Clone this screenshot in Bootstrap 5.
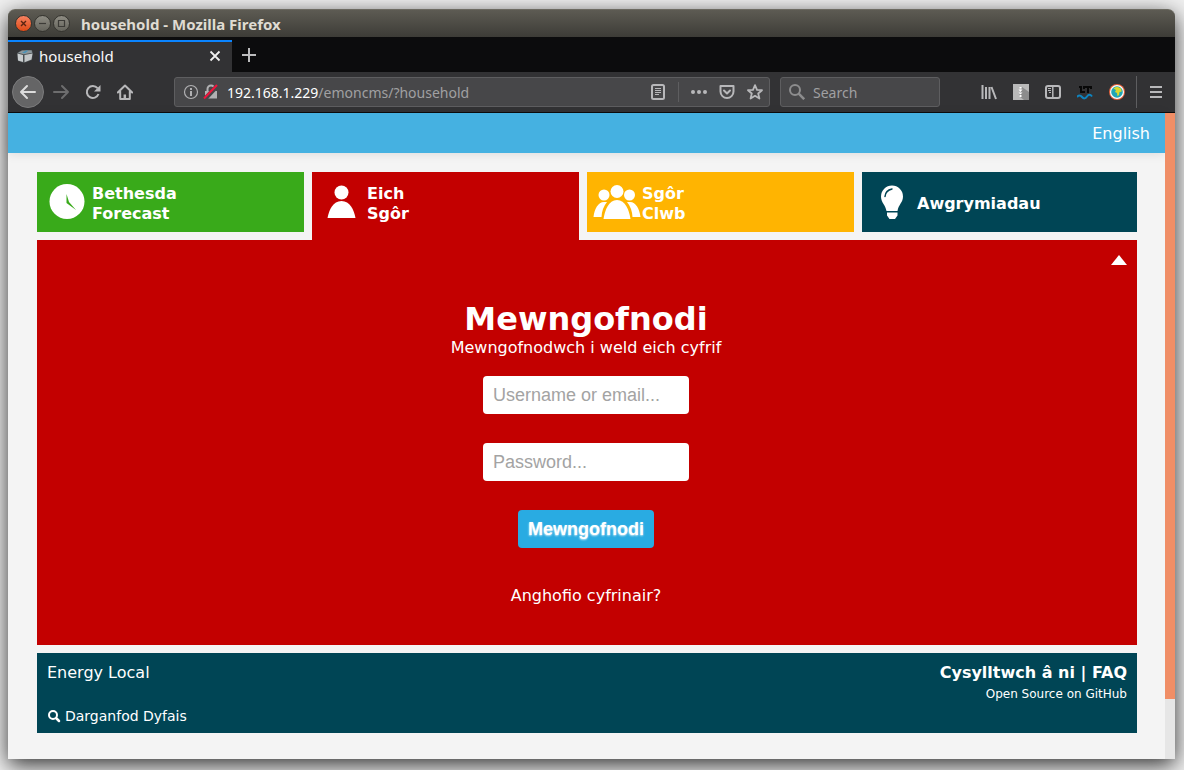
<!DOCTYPE html>
<html lang="cy">
<head>
<meta charset="utf-8">
<meta name="viewport" content="width=device-width, initial-scale=1">
<title>household - Mozilla Firefox</title>
<link href="https://cdn.jsdelivr.net/npm/bootstrap@5.3.0/dist/css/bootstrap.min.css" rel="stylesheet">
<style>
  :root { --red: #c30000; --green: #39aa1a; --amber: #ffb401; --teal: #004555; --sky: #45b1e1; --page: #f4f4f4; }
  body { font: 16px/20px "DejaVu Sans", sans-serif; background: #f0f0f0; color: #fff; }
  a { color: #fff; text-decoration: none; }
  a:hover { color: #fff; text-decoration: underline; }
  svg { display: block; flex: none; }
  .desktop { min-height: 100vh; padding: 9px 9px 11px 8px; overflow: hidden; }
  .app-window { border-radius: 7px 7px 0 0; box-shadow: 0 6px 22px rgba(0, 0, 0, .8); }

  /* browser chrome */
  .chrome-text { font-family: "Noto Sans", sans-serif; font-size: 14px; }
  .title-bar { height: 28px; padding-left: 7px; border-radius: 7px 7px 0 0; color: #dfdbd2; background: linear-gradient(#5d5b53, #3d3c37); border-top: 1px solid #6c6a61; }
  .title-bar strong { font-size: 15px; }
  .win-buttons { gap: 2px; margin-right: 11px; }
  .win-btn { width: 17px; height: 17px; padding: 0; border: 1px solid #35342f; border-radius: 50%; background: linear-gradient(#8e8c83, #65645c); display: grid; place-items: center; }
  .win-close { background: linear-gradient(#f58261, #df4a16); }
  .tab-strip { height: 35px; background: #0c0c0d; padding-top: 3px; }
  .browser-tab { width: 224px; background: #323234; border-top: 2px solid #0a84ff; padding: 0 9px 2px; color: #f9f9fa; font-size: 15px; gap: 6px; }
  .bare { background: none; border: 0; padding: 0; color: #b8b8ba; display: grid; place-items: center; }
  .new-tab { width: 34px; padding-bottom: 2px; }
  .tool-bar { height: 41px; background: #323234; border-bottom: 1px solid #0c0c0d; padding: 0 3px 0 4px; }
  .tool-bar .bare { width: 32px; height: 32px; flex: none; }
  .tool-bar .back { border: 1px solid #7c7c7d; border-radius: 50%; background: #656566; color: #dcdcdc; margin-right: 1px; }
  .field { height: 30px; background: #474749; border: 1px solid #5e5e60; border-radius: 3px; color: #b1b1b3; }
  .field input { background: none; border: 0; padding: 0; outline: 0; color: #a0a0a2; min-width: 0; }
  .field input::placeholder { color: #a0a0a2; opacity: 1; }
  .tool-bar .field .bare { width: 28px; height: 28px; }
  .field label, .field input { padding-top: 2px; }
  .url-field { margin: 0 10px 0 33px; padding-left: 8px; }
  .search-field { width: 160px; margin-right: 33px; }
  .divider { width: 1px; background: #5e5e60; margin: 4px 3px; }
  .field .divider { margin: 4px 6px; }

  /* page */
  .viewport-area { background: var(--page); }
  .site-bar { height: 40px; background: var(--sky); box-shadow: 0 1px 10px rgba(0, 0, 0, .1); padding: 2px 15px 0; }
  .scroll-track { width: 10px; background: #e6e6e6; }
  .scroll-thumb { height: 586px; background: #f08e66; }
  .site-main { padding: 19px 28px 26px 29px; }
  .tile { height: 60px; width: 100%; border: 0; padding: 0 5px; color: #fff; font-weight: bold; text-align: left; display: flex; align-items: center; }
  .tile svg { width: 50px; height: 50px; }
  .tile span { padding-top: 3px; }
  .tile.active { height: 68px; padding-bottom: 8px; }
  .bg-green { background: var(--green); }
  .bg-red { background: var(--red); }
  .bg-amber { background: var(--amber); }
  .bg-teal { background: var(--teal); }
  .login-panel { min-height: 405px; padding: 14px 9px 38px; }
  .login-panel h1 { font-size: 32px; line-height: 38px; font-weight: bold; margin: 34px 0 0; }
  .login-form { padding-right: 2px; }
  .login-form p { margin-bottom: 18px; }
  .login-input { width: 206px; height: 38px; border: 0; border-radius: 4px; padding: 0 10px; margin-bottom: 29px; font: 18px/24px "Liberation Sans", sans-serif; color: #555; }
  .login-input::placeholder { color: #a3a3a3; opacity: 1; }
  .login-btn { height: 38px; border: 0; border-radius: 4px; background: #29abe2; color: #fff; padding: 0 10px; margin-bottom: 38px; font: bold 18px/24px "Liberation Sans", sans-serif; text-shadow: 0 1px 2px rgba(255, 255, 255, .75); }
  .site-footer { min-height: 80px; padding: 10px 10px 7px; }
  .text-sm { font-size: 14px; }
  .text-xs { font-size: 12px; }
</style>
</head>
<body>
<div class="desktop d-flex flex-column">
<div class="app-window d-flex flex-column flex-grow-1">

  <div class="title-bar chrome-text d-flex align-items-center">
    <div class="win-buttons d-flex">
      <button class="win-btn win-close" aria-label="Close"><svg width="7" height="7" stroke="#5a2412" stroke-width="1.4"><path d="M1 1l5 5M6 1l-5 5"/></svg></button>
      <button class="win-btn" aria-label="Minimize"><svg width="9" height="9" stroke="#3c3b37" stroke-width="1.2"><path d="M1 4.500h7"/></svg></button>
      <button class="win-btn" aria-label="Maximize"><svg width="9" height="9" stroke="#3c3b37" stroke-width="1.2" fill="none"><path d="M1.500 1.500h6v6h-6z"/></svg></button>
    </div>
    <strong>household - Mozilla Firefox</strong>
  </div>

  <div class="tab-strip chrome-text d-flex">
    <div class="browser-tab d-flex align-items-center">
      <svg width="16" height="14" viewBox="0 0 16 14"><path fill="#4a4f52" d="M0 4l5-3 10 0 1 3-1 7-8 3-6-2z"/><path fill="#c9cdcf" d="M.5 4.500l5.500 1.500v7l-5-1.500z"/><path fill="#c3c7c9" d="M7.500 6l8-1.500-1 6-7 2.800z"/><path fill="#8d989d" d="M1 3.800l4-2.300 9.500-.3.700 2.500-8.500 1.600z"/><path fill="#4a93b8" d="M5 3.800l4-2.400h2.500L8 4.300z"/></svg>
      <span class="flex-grow-1">household</span>
      <button class="bare" aria-label="Close tab"><svg width="16" height="16" stroke="#f0f0f0" stroke-width="1.800"><path d="M3.500 3.500l9 9M12.500 3.500l-9 9"/></svg></button>
    </div>
    <button class="bare new-tab" aria-label="New tab"><svg width="16" height="16" stroke="#bcbcbd" stroke-width="2"><path d="M8 1v14M1 8h14"/></svg></button>
  </div>

  <div class="tool-bar chrome-text d-flex align-items-center">
    <button class="bare back" aria-label="Back"><svg width="18" height="16" fill="none" stroke="currentColor" stroke-width="2" stroke-linecap="round" stroke-linejoin="round"><path d="M16 8H2M8 2L2 8l6 6"/></svg></button>
    <button class="bare" aria-label="Forward"><svg width="18" height="16" fill="none" stroke="#6d6d6e" stroke-width="2" stroke-linecap="round" stroke-linejoin="round"><path d="M2 8h14M10 2l6 6-6 6"/></svg></button>
    <button class="bare" aria-label="Reload"><svg width="16" height="16" fill="none" stroke="currentColor" stroke-width="2"><path d="M13.500 10A6 6 0 1 1 12.500 4.200"/><path fill="currentColor" stroke="none" d="M15.500 1v6.500H9z"/></svg></button>
    <button class="bare" aria-label="Home"><svg width="16" height="16" fill="none" stroke="currentColor" stroke-width="2" stroke-linejoin="round"><path d="M.8 8.500L8 1.500l7.200 7M3.200 7.500V15h9.600V7.500" stroke-linecap="round"/><path d="M7.800 15v-4.500" stroke-width="2.500"/></svg></button>

    <div class="field url-field flex-grow-1 d-flex align-items-center">
      <svg width="16" height="16" fill="none" stroke="currentColor" stroke-width="1.200"><circle cx="8" cy="8" r="6.500"/><path stroke-width="2" d="M8 7v5M8 4v2"/></svg>
      <svg class="ms-1" width="16" height="16" viewBox="0 0 16 16"><path fill="#b1b1b3" d="M2 7h12v7.500H2z"/><path fill="none" stroke="#b1b1b3" stroke-width="2" d="M4.500 8V5a3.500 3.500 0 0 1 7 0v3"/><path stroke="#474749" stroke-width="4.500" d="M1 16L15 1"/><path stroke="#f0143c" stroke-width="2" d="M1 14.500L14 1"/></svg>
      <label class="ps-2 text-white" for="address">192.168.1.229</label>
      <input id="address" class="flex-grow-1" value="/emoncms/?household">
      <button class="bare" aria-label="Reader view"><svg width="16" height="16" fill="none" stroke="currentColor"><rect x="2" y="1" width="12" height="14" rx="1.500" stroke-width="2"/><path d="M5 4.500h6M5 6.500h6M5 8.500h6M5 10.500h4"/></svg></button>
      <span class="divider align-self-stretch"></span>
      <button class="bare" aria-label="Page actions"><svg width="16" height="16" fill="currentColor"><circle cx="2" cy="8" r="2"/><circle cx="8" cy="8" r="2"/><circle cx="14" cy="8" r="2"/></svg></button>
      <button class="bare" aria-label="Save to Pocket"><svg width="16" height="16" fill="none" stroke="currentColor" stroke-width="2" stroke-linecap="round" stroke-linejoin="round"><path d="M1.500 2h13v5.500a6.500 6.500 0 0 1-13 0zM5 6.500l3 3 3-3"/></svg></button>
      <button class="bare" aria-label="Bookmark"><svg width="16" height="16" fill="none" stroke="currentColor" stroke-width="1.800" stroke-linejoin="round"><path d="M8 1.200l2 4.600 5 .4-3.800 3.300 1.200 5L8 11.800 3.600 14.500l1.200-5L1 6.200l5-.4z"/></svg></button>
    </div>
    <div class="field search-field d-flex align-items-center ps-2 gap-2">
      <svg width="16" height="16" fill="none" stroke="#8d8d8e" stroke-width="2"><circle cx="6" cy="6" r="5"/><path stroke-width="2.500" d="M9.700 9.700l5.500 5.500"/></svg>
      <input class="w-75" type="search" placeholder="Search" aria-label="Search">
    </div>

    <div class="d-flex">
      <button class="bare" aria-label="Library"><svg width="16" height="16" stroke="currentColor" stroke-width="2"><path d="M1.500 1v14M5 3v12M8.500 3v12M10.500 3l4.500 12"/></svg></button>
      <button class="bare" aria-label="Archive extension"><svg width="16" height="16"><path fill="#b9b9b9" d="M0 0h16v16H0z"/><path fill="#8c8c8c" d="M9 3l7 5v8h-5l-5-4z"/><path fill="#fff" d="M6.500 3h2v1.500h-2zM5.500 5.500h4l-2 2.500zM5.500 8.500h4l-2 2zM6.500 11h2v2h-2z"/></svg></button>
      <button class="bare" aria-label="Sidebars"><svg width="16" height="16" fill="none" stroke="currentColor"><rect x="1" y="2" width="14" height="12" rx="2" stroke-width="2"/><path stroke-width="1.500" d="M7.800 2v12"/><path d="M3 4.500h3M3 6.500h3M4 8.500h2"/></svg></button>
      <button class="bare" aria-label="LanguageTool"><svg width="16" height="16" fill="none"><path stroke="#080808" stroke-width="2" d="M2 3h2v5h4M7 5V3h7v2M11 3v6"/><path stroke="#0e84c0" stroke-width="2" d="M0 13q2.500-3 5 0t5-.5 5 0"/></svg></button>
      <button class="bare" aria-label="Globe extension"><svg width="16" height="16"><circle cx="8" cy="8" r="8" fill="#e0603c"/><circle cx="8" cy="8" r="7" fill="#fff"/><circle cx="8" cy="8" r="5.800" fill="#21a5b5"/><path fill="#d9d82c" d="M4.500 4.500q1.500-1.500 4-1.800l3.500 1.800.8 3-2.300.5-.5 3-1.500 1.200-.5-3.200L6 8 7 6z"/></svg></button>
    </div>
    <span class="divider align-self-stretch"></span>
    <button class="bare" aria-label="Menu"><svg width="12" height="12" stroke="currentColor" stroke-width="2"><path d="M0 1h12M0 6h12M0 11h12"/></svg></button>
  </div>

  <div class="viewport-area d-flex flex-grow-1">
    <div class="flex-grow-1 d-flex flex-column">
      <nav class="site-bar d-flex align-items-center justify-content-end"><a href="#">English</a></nav>

      <main class="site-main">
        <div class="row g-0 align-items-start">
          <div class="col-3 pe-2"><button class="tile bg-green">
            <svg viewBox="0 0 50 50"><circle cx="25" cy="24.500" r="17.500" fill="#fff"/><path fill="#39aa1a" d="M24.500 17l2.500 8 7 8-9.500-7z"/></svg>
            <span>Bethesda<br>Forecast</span></button></div>
          <div class="col-3 pe-2"><button class="tile active bg-red">
            <svg viewBox="0 0 50 50" fill="#fff"><circle cx="24.500" cy="15.500" r="7"/><path d="M10.500 41C12 33 16 24 24.500 24S37 33 38.500 41z"/></svg>
            <span>Eich<br>Sgôr</span></button></div>
          <div class="col-3 pe-2"><button class="tile bg-amber">
            <svg viewBox="0 0 50 50" fill="#fff"><circle cx="12" cy="18" r="5.500"/><circle cx="37.500" cy="18" r="5.500"/><path d="M1.500 40C2.500 32 6 25 12 25h3Q10 31 9.500 40zM48.500 40C47.500 32 44 25 38 25h-3Q40 31 40.500 40z"/><circle cx="25" cy="14.500" r="6.500"/><path d="M11.500 42C13 33 16.500 23 25 23S37 33 38.500 42z"/></svg>
            <span>Sgôr<br>Clwb</span></button></div>
          <div class="col-3"><button class="tile bg-teal">
            <svg viewBox="0 0 50 50"><path fill="#fff" d="M14 19.500a11 11 0 0 1 22 0c0 6-4.500 8-5.500 14.500h-11C18.500 28 14 25.500 14 19.500zM20 35.500h10.500v3L28 42h-5.500L20 38.500z"/><path fill="none" stroke="#004555" stroke-width="1.500" stroke-linecap="round" d="M18 19.500q.5-6 7-7.500"/></svg>
            <span>Awgrymiadau</span></button></div>
        </div>

        <section class="login-panel bg-red mb-2 text-center">
          <div class="d-flex justify-content-end"><button class="bare" aria-label="Collapse"><svg width="18" height="12" fill="#fff"><path d="M1 11L9 1l8 10z"/></svg></button></div>
          <form class="login-form d-flex flex-column align-items-center">
            <h1>Mewngofnodi</h1>
            <p>Mewngofnodwch i weld eich cyfrif</p>
            <input class="login-input" type="text" placeholder="Username or email..." aria-label="Username or email">
            <input class="login-input" type="password" placeholder="Password..." aria-label="Password">
            <button class="login-btn" type="button">Mewngofnodi</button>
            <a href="#">Anghofio cyfrinair?</a>
          </form>
        </section>

        <footer class="site-footer bg-teal d-flex justify-content-between">
          <div class="d-flex flex-column justify-content-between">
            <a href="#">Energy Local</a>
            <a class="text-sm d-flex align-items-center gap-1" href="#"><svg width="14" height="14" fill="none" stroke="#fff" stroke-width="2"><circle cx="6" cy="6" r="4"/><path stroke-width="2.500" stroke-linecap="round" d="M9.500 9.500l2.500 2.500"/></svg>Darganfod Dyfais</a>
          </div>
          <div class="text-end">
            <div class="fw-bold"><a href="#">Cysylltwch â ni</a> | <a href="#">FAQ</a></div>
            <a class="text-xs" href="#">Open Source on GitHub</a>
          </div>
        </footer>
      </main>
    </div>
    <div class="scroll-track"><div class="scroll-thumb"></div></div>
  </div>
</div>
</div>
<script src="https://cdn.jsdelivr.net/npm/bootstrap@5.3.0/dist/js/bootstrap.bundle.min.js"></script>
</body>
</html>
